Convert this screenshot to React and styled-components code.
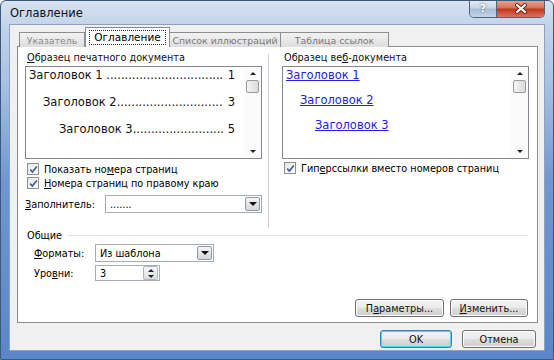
import styled, { createGlobalStyle } from "styled-components";

const GlobalStyle = createGlobalStyle`
	html, body {
		margin: 0;
		padding: 0;
		background: #ffffff;
	}
	body {
		font-family: "DejaVu Sans", "Noto Sans", sans-serif;
		font-size: 9.7px;
		color: #000;
	}
`;

const toc = [
	{ title: "Заголовок 1\u00a0", page: "1", indent: 0, dots: 32 },
	{ title: "Заголовок 2", page: "3", indent: 14, dots: 29 },
	{ title: "Заголовок 3", page: "5", indent: 30, dots: 25 },
];

export default function App() {
	return (
		<>
			<GlobalStyle />
			<Window>
				<TitleBar>
					<Title>Оглавление</Title>
					<Caption>
						<HelpButton>?</HelpButton>
						<CloseButton>
							<svg width="14" height="11" viewBox="0 0 14 11">
								<path d="M3 2 L11 9 M11 2 L3 9" stroke="#6b2418" strokeWidth="4" strokeLinecap="round" />
								<path d="M3 2 L11 9 M11 2 L3 9" stroke="#ffffff" strokeWidth="2.2" strokeLinecap="round" />
							</svg>
						</CloseButton>
					</Caption>
				</TitleBar>

				<Client>
					<TabRow>
						<Tab $width={66} $muted>Указатель</Tab>
						<ActiveTab $width={85}>
							<Focus>Оглавление</Focus>
						</ActiveTab>
						<Tab $width={112}>Список иллюстраций</Tab>
						<Tab $width={109}>Таблица ссылок</Tab>
					</TabRow>

					<Panel>
						<TopSection>
							<Column>
								<Label>
									<u>О</u>бразец печатного документа
								</Label>
								<Preview>
									<PreviewBody>
										{toc.map((line) => (
											<TocLine $indent={line.indent} key={line.page}>
												<span>{line.title}</span>
												<Leader>{".".repeat(line.dots)}</Leader>
												<span>&nbsp;{line.page}</span>
											</TocLine>
										))}
									</PreviewBody>
									<ScrollBar />
								</Preview>
								<CheckRow $top={3}>
									<CheckBox />
									<span>
										Показать но<u>м</u>ера страниц
									</span>
								</CheckRow>
								<CheckRow $top={0}>
									<CheckBox />
									<span>
										<u>Н</u>омера страниц по правому краю
									</span>
								</CheckRow>
								<FieldRow $top={5}>
									<FieldLabel $width={80}>
										<u>З</u>аполнитель:
									</FieldLabel>
									<Combo $width={157}>
										<ComboText>.......</ComboText>
										<DropButton />
									</Combo>
								</FieldRow>
							</Column>

							<Divider />

							<Column>
								<Label>
									Образец ве<u>б</u>-документа
								</Label>
								<Preview>
									<PreviewBody>
										<WebLink $indent={0}>Заголовок 1</WebLink>
										<WebLink $indent={14}>Заголовок 2</WebLink>
										<WebLink $indent={29}>Заголовок 3</WebLink>
									</PreviewBody>
									<ScrollBar />
								</Preview>
								<CheckRow $top={2}>
									<CheckBox />
									<span>
										Гип<u>е</u>рссылки вместо номеров страниц
									</span>
								</CheckRow>
							</Column>
						</TopSection>

						<GroupHeader>
							<span>Общие</span>
							<GroupLine />
						</GroupHeader>

						<FieldRow $top={2} $indent={9}>
							<FieldLabel $width={61}>
								<u>Ф</u>орматы:
							</FieldLabel>
							<Combo $width={119}>
								<ComboText>Из шаблона</ComboText>
								<DropButton />
							</Combo>
						</FieldRow>
						<FieldRow $top={3} $indent={9}>
							<FieldLabel $width={61}>
								Уро<u>в</u>ни:
							</FieldLabel>
							<Spinner>
								<ComboText>3</ComboText>
								<SpinButtons>
									<SpinHalf>
										<Arrow $up />
									</SpinHalf>
									<SpinHalf>
										<Arrow />
									</SpinHalf>
								</SpinButtons>
							</Spinner>
						</FieldRow>

						<PanelButtons>
							<Button $width={89}>
								П<u>а</u>раметры...
							</Button>
							<Button $width={78}>
								<u>И</u>зменить...
							</Button>
						</PanelButtons>
					</Panel>

					<DialogButtons>
						<Button $width={72} $default>
							OK
						</Button>
						<Button $width={74}>Отмена</Button>
					</DialogButtons>
				</Client>
			</Window>
		</>
	);

	function ScrollBar() {
		return (
			<Scroll>
				<ScrollEnd>
					<Arrow $up />
				</ScrollEnd>
				<Thumb />
				<ScrollTrack />
				<ScrollEnd>
					<Arrow />
				</ScrollEnd>
			</Scroll>
		);
	}

	function CheckBox() {
		return (
			<Box>
				<svg width="9" height="9" viewBox="0 0 9 9">
					<path d="M1.2 4.6 L3.4 7 L7.8 1.4" fill="none" stroke="#3d5a9a" strokeWidth="1.6" />
				</svg>
			</Box>
		);
	}
}

const Window = styled.div`
	box-sizing: border-box;
	width: 554px;
	height: 360px;
	display: flex;
	flex-direction: column;
	border: 1px solid #3e5879;
	border-radius: 6px 6px 0 0;
	background: linear-gradient(
		to bottom,
		#d6e2f0 0px,
		#c3d4ea 24px,
		#a9c2e3 80px,
		#7196d1 180px,
		#5a86c9 100%
	);
	overflow: hidden;
`;

const TitleBar = styled.div`
	display: flex;
	align-items: flex-start;
	height: 23px;
	padding-left: 9px;
`;

const Title = styled.div`
	font-size: 11.5px;
	line-height: 24px;
	color: #111;
`;

const Caption = styled.div`
	display: flex;
	margin-left: auto;
	margin-right: 8px;
	margin-top: -1px;
	height: 17px;
	border: 1px solid #51627d;
	border-top: none;
	border-radius: 0 0 5px 5px;
	overflow: hidden;
`;

const HelpButton = styled.div`
	width: 26px;
	display: flex;
	justify-content: center;
	align-items: center;
	font-weight: bold;
	font-size: 11px;
	color: #ffffff;
	text-shadow: 0 0 2px #2d3e5c;
	border-right: 1px solid #51627d;
	background: linear-gradient(to bottom, #e3ebf4 0%, #c8d5e6 48%, #a9bcd6 52%, #c3d3e8 100%);
`;

const CloseButton = styled.div`
	width: 47px;
	display: flex;
	justify-content: center;
	align-items: center;
	background: linear-gradient(to bottom, #e8a797 0%, #d6725c 45%, #c2381f 55%, #d7755f 100%);
`;

const Client = styled.div`
	box-sizing: border-box;
	height: 327px;
	margin: 0 8px;
	padding: 3px 6px 0 7px;
	display: flex;
	flex-direction: column;
	background: #f0f0f0;
	border: 1px solid #8ba2c0;
`;

const TabRow = styled.div`
	display: flex;
	align-items: flex-end;
	height: 19px;
	padding-left: 2px;
	position: relative;
	z-index: 1;
	margin-bottom: -1px;
`;

const Tab = styled.div`
	box-sizing: border-box;
	width: ${(p) => p.$width}px;
	height: 15px;
	display: flex;
	justify-content: center;
	align-items: center;
	border: 1px solid #8c8e94;
	border-bottom: none;
	margin-left: -1px;
	background: linear-gradient(to bottom, #f2f2f2, #dedede);
	color: ${(p) => (p.$muted ? "#8a8a8a" : "#7a7a7a")};
	font-size: 9.4px;
	white-space: nowrap;
	&:first-child {
		margin-left: 0;
	}
`;

const ActiveTab = styled.div`
	box-sizing: border-box;
	width: ${(p) => p.$width}px;
	height: 20px;
	display: flex;
	justify-content: center;
	align-items: center;
	border: 1px solid #8c8e94;
	border-bottom: none;
	background: #ffffff;
	position: relative;
	z-index: 2;
`;

const Focus = styled.div`
	padding: 0 4px;
	line-height: 13px;
	border: 1px dotted #333;
	font-size: 10.5px;
`;

const Panel = styled.div`
	box-sizing: border-box;
	height: 277px;
	display: flex;
	flex-direction: column;
	padding: 4px 9px 5px 7px;
	background: #ffffff;
	border: 1px solid #898c95;
`;

const TopSection = styled.div`
	display: grid;
	grid-template-columns: 237px 20px 247px;
	height: 177px;
`;

const Column = styled.div`
	display: flex;
	flex-direction: column;
`;

const Divider = styled.div`
	width: 1px;
	margin: 3px 0 0 6px;
	background: #d0d0d0;
`;

const Label = styled.div`
	line-height: 14px;
	height: 14px;
	margin-left: 2px;
	color: #111;
`;

const Preview = styled.div`
	box-sizing: border-box;
	height: 93px;
	margin-top: 1px;
	display: flex;
	border: 1px solid #828790;
	background: #ffffff;
`;

const PreviewBody = styled.div`
	flex: 1;
	min-width: 0;
	padding: 1px 9px 0 3px;
	display: flex;
	flex-direction: column;
	gap: 13px;
`;

const TocLine = styled.div`
	display: flex;
	padding-left: ${(p) => p.$indent}px;
	font-size: 11.5px;
	line-height: 14px;
	white-space: nowrap;
	color: #111;
`;

const Leader = styled.span`
	flex: 1;
	min-width: 0;
	overflow: hidden;
`;

const WebLink = styled.a`
	align-self: flex-start;
	margin-left: ${(p) => p.$indent}px;
	margin-bottom: -2px;
	font-size: 11.5px;
	line-height: 14px;
	color: #2222dd;
	text-decoration: underline;
`;

const Scroll = styled.div`
	width: 17px;
	display: flex;
	flex-direction: column;
	align-items: center;
	background: #fbfbfb;
`;

const ScrollEnd = styled.div`
	height: 13px;
	display: flex;
	justify-content: center;
	align-items: center;
`;

const Thumb = styled.div`
	box-sizing: border-box;
	width: 13px;
	height: 13px;
	border: 1px solid #9a9a9a;
	border-radius: 2px;
	background: linear-gradient(to right, #f4f4f4, #dcdcdc);
`;

const ScrollTrack = styled.div`
	flex: 1;
`;

const Arrow = styled.span`
	width: 0;
	height: 0;
	border-left: 3px solid transparent;
	border-right: 3px solid transparent;
	${(p) =>
		p.$up ? "border-bottom: 3px solid #222;" : "border-top: 3px solid #222;"}
`;

const CheckRow = styled.div`
	display: flex;
	align-items: center;
	gap: 5px;
	height: 14px;
	margin: ${(p) => p.$top}px 0 0 2px;
	white-space: nowrap;
`;

const Box = styled.div`
	box-sizing: border-box;
	width: 12px;
	height: 12px;
	display: flex;
	justify-content: center;
	align-items: center;
	border: 1px solid #8e8f8f;
	background: linear-gradient(135deg, #e6e6e6, #ffffff);
`;

const FieldRow = styled.div`
	display: flex;
	align-items: center;
	margin: ${(p) => p.$top}px 0 0 ${(p) => p.$indent || 0}px;
	white-space: nowrap;
`;

const FieldLabel = styled.div`
	width: ${(p) => p.$width}px;
	flex-shrink: 0;
`;

const Combo = styled.div`
	box-sizing: border-box;
	width: ${(p) => p.$width}px;
	height: 18px;
	display: flex;
	align-items: center;
	border: 1px solid #a5acb5;
	background: #ffffff;
	padding-right: 1px;
`;

const ComboText = styled.div`
	flex: 1;
	padding-left: 4px;
`;

const DropButton = styled.div`
	box-sizing: border-box;
	width: 15px;
	height: 14px;
	display: flex;
	justify-content: center;
	align-items: center;
	border: 1px solid #8f9aa8;
	border-radius: 2px;
	background: linear-gradient(to bottom, #f4f4f4, #d6d6d6);
	&::after {
		content: "";
		border-left: 4px solid transparent;
		border-right: 4px solid transparent;
		border-top: 4px solid #111;
	}
`;

const Spinner = styled.div`
	box-sizing: border-box;
	width: 65px;
	height: 16px;
	display: flex;
	align-items: center;
	border: 1px solid #a5acb5;
	background: #ffffff;
	padding-right: 1px;
`;

const SpinButtons = styled.div`
	width: 13px;
	height: 12px;
	display: flex;
	flex-direction: column;
	border: 1px solid #b0b6be;
	border-radius: 2px;
	background: linear-gradient(to bottom, #f6f6f6, #dedede);
`;

const SpinHalf = styled.div`
	flex: 1;
	display: flex;
	justify-content: center;
	align-items: center;
`;

const GroupHeader = styled.div`
	display: flex;
	align-items: center;
	gap: 6px;
	height: 14px;
	margin-left: 2px;
`;

const GroupLine = styled.div`
	flex: 1;
	height: 1px;
	background: #dbdfe4;
`;

const PanelButtons = styled.div`
	display: flex;
	justify-content: flex-end;
	gap: 6px;
	margin-top: auto;
`;

const Button = styled.div`
	box-sizing: border-box;
	width: ${(p) => p.$width}px;
	height: 18px;
	display: flex;
	justify-content: center;
	align-items: center;
	border: 1px solid ${(p) => (p.$default ? "#3c7fb1" : "#707070")};
	border-radius: 3px;
	box-shadow: ${(p) =>
		p.$default ? "inset 0 0 0 1px #48d7fb" : "inset 0 0 0 1px #fcfcfc"};
	background: linear-gradient(to bottom, #f2f2f2 0%, #ebebeb 48%, #dddddd 52%, #cfcfcf 100%);
	white-space: nowrap;
	color: #111;
`;

const DialogButtons = styled.div`
	display: flex;
	justify-content: flex-end;
	gap: 10px;
	margin-top: 7px;
	padding-right: 2px;
`;
